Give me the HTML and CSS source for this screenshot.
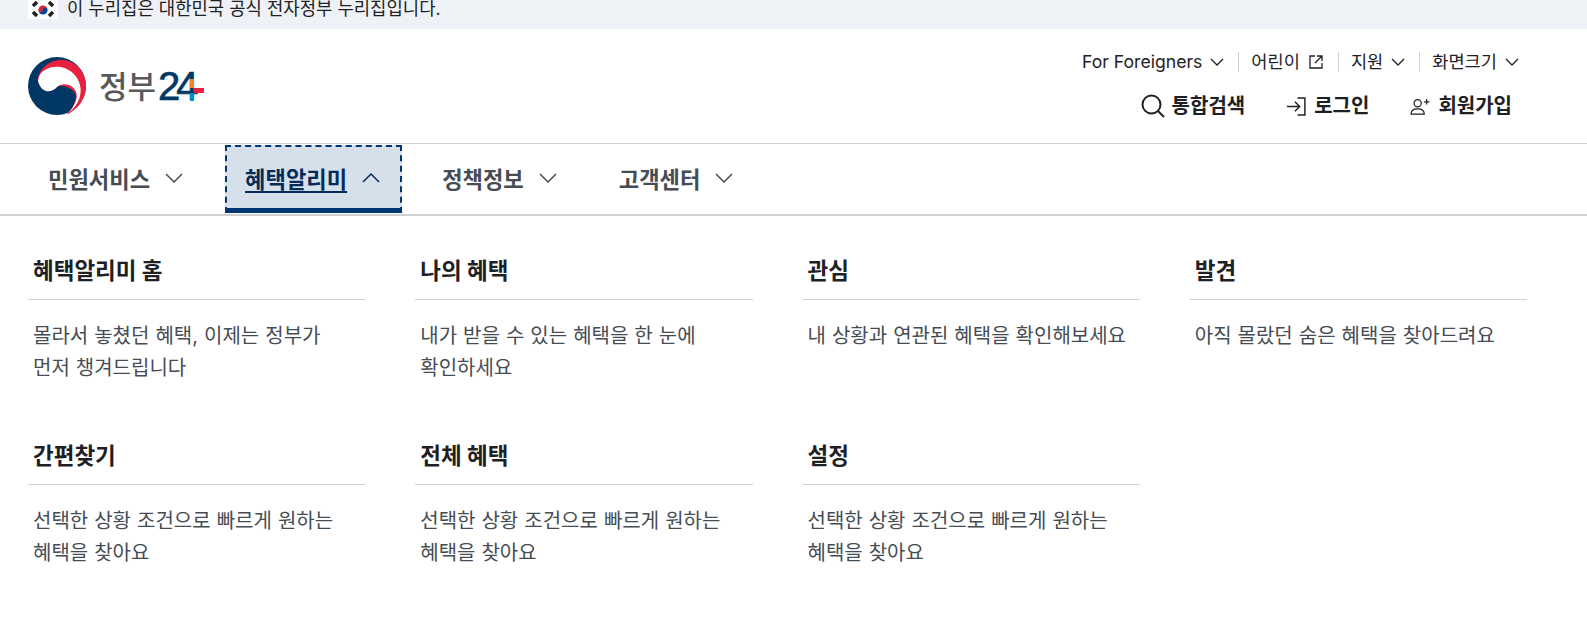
FILE: index.html
```html
<!DOCTYPE html>
<html lang="ko">
  <head>
    <meta charset="utf-8">
    <title>정부24</title>
    <link rel="stylesheet" href="styles.css">
  </head>
  <body>
    <div class="notice-bar">
      <svg class="flag" viewBox="0 0 30 19">
        <rect width="30" height="19" fill="#fff"/>
        <path d="M5 6 L9 2 M21 2 L25 6 M5 12 L9 16 M21 16 L25 12" stroke="#222" stroke-width="3.500"/>
        <path d="M10.500 10 a4.500 4.500 0 0 1 9 0 z" fill="#cd2e3a"/>
        <path d="M10.500 10 a4.500 4.500 0 0 0 9 0 z" fill="#0047a0"/>
        <circle cx="12.700" cy="10" r="2.250" fill="#cd2e3a"/>
        <circle cx="17.200" cy="10" r="2.250" fill="#0047a0"/>
      </svg>
      <span>이 누리집은 대한민국 공식 전자정부 누리집입니다.</span>
    </div>

    <header class="header">
      <a class="logo">
        <svg class="logo-mark" viewBox="14 14 174 174">
          <circle cx="101" cy="101" r="87" fill="#003764"/>
          <path d="M43 85 C45 50 78 22 115 22 C158 24 188 60 188 100 C188 138 165 170 130 187 C145 172 158 150 158 130 C150 100 100 95 100 105 C85 122 55 125 43 85 Z" fill="#e8213f"/>
          <path d="M44 85 C47 55 75 42 105 43 C140 45 170 75 172 110 C173 140 158 165 135 182 C155 160 165 135 158 118 C148 95 118 88 100 105 C85 122 55 125 44 85 Z" fill="#fff"/>
        </svg>
        <span class="logo-text">정부</span><span class="logo-num">24</span>
        <svg class="logo-plus" viewBox="0 0 14 22">
          <rect x="0" y="0" width="4" height="9" fill="#f58220"/>
          <rect x="4" y="9" width="10" height="5" fill="#e8213f"/>
          <rect x="0" y="14" width="4" height="8" fill="#0090d4"/>
        </svg>
      </a>
      <div class="header-right">
        <ul class="util-menu">
          <li>For Foreigners <svg class="chev" viewBox="0 0 14 8"><path d="M1 1 L7 7 L13 1"/></svg></li>
          <li>어린이 <svg class="ext" viewBox="0 0 16 16"><path d="M7 2 H2 V14 H14 V9 M9 2 H14 V7 M14 2 L7 9"/></svg></li>
          <li>지원 <svg class="chev" viewBox="0 0 14 8"><path d="M1 1 L7 7 L13 1"/></svg></li>
          <li>화면크기 <svg class="chev" viewBox="0 0 14 8"><path d="M1 1 L7 7 L13 1"/></svg></li>
        </ul>
        <div class="actions">
          <a class="action">
            <svg class="icon-search" viewBox="0 0 24 24"><circle cx="10.500" cy="10.500" r="9"/><path d="M17 17 L23 23"/></svg>
            통합검색
          </a>
          <a class="action">
            <svg class="icon-login" viewBox="0 0 20 20"><path d="M11 2 H18 V18 H11 M1 10 H13 M8.500 5.500 L13 10 L8.500 14.500"/></svg>
            로그인
          </a>
          <a class="action">
            <svg class="icon-user" viewBox="0 0 22 18"><circle cx="8" cy="5.500" r="3.800"/><path d="M1 17 C1 13 4 11.500 8 11.500 C12 11.500 15 13 15 17 Z M17.500 1 V7 M14.500 4 H20.500"/></svg>
            회원가입
          </a>
        </div>
      </div>
    </header>

    <nav class="nav">
      <a class="nav-item">민원서비스 <svg class="nav-chev" viewBox="0 0 18 10"><path d="M1 1 L9 9 L17 1"/></svg></a>
      <a class="nav-item active"><span class="nav-label">혜택알리미</span> <svg class="nav-chev" viewBox="0 0 18 10"><path d="M1 9 L9 1 L17 9"/></svg></a>
      <a class="nav-item">정책정보 <svg class="nav-chev" viewBox="0 0 18 10"><path d="M1 1 L9 9 L17 1"/></svg></a>
      <a class="nav-item">고객센터 <svg class="nav-chev" viewBox="0 0 18 10"><path d="M1 1 L9 9 L17 1"/></svg></a>
    </nav>

    <main class="menu-grid">
      <section class="menu-card">
        <h3 class="menu-title">혜택알리미 홈</h3>
        <p class="menu-desc">몰라서 놓쳤던 혜택, 이제는 정부가<br>먼저 챙겨드립니다</p>
      </section>
      <section class="menu-card">
        <h3 class="menu-title">나의 혜택</h3>
        <p class="menu-desc">내가 받을 수 있는 혜택을 한 눈에<br>확인하세요</p>
      </section>
      <section class="menu-card">
        <h3 class="menu-title">관심</h3>
        <p class="menu-desc">내 상황과 연관된 혜택을 확인해보세요</p>
      </section>
      <section class="menu-card">
        <h3 class="menu-title">발견</h3>
        <p class="menu-desc">아직 몰랐던 숨은 혜택을 찾아드려요</p>
      </section>
      <section class="menu-card">
        <h3 class="menu-title">간편찾기</h3>
        <p class="menu-desc">선택한 상황 조건으로 빠르게 원하는<br>혜택을 찾아요</p>
      </section>
      <section class="menu-card">
        <h3 class="menu-title">전체 혜택</h3>
        <p class="menu-desc">선택한 상황 조건으로 빠르게 원하는<br>혜택을 찾아요</p>
      </section>
      <section class="menu-card">
        <h3 class="menu-title">설정</h3>
        <p class="menu-desc">선택한 상황 조건으로 빠르게 원하는<br>혜택을 찾아요</p>
      </section>
    </main>
  </body>
</html>
```

FILE: styles.css
```css
* {
  box-sizing: border-box;
}

body {
  margin: 0;
  background-color: white;
  color: #1e2124;
  font-family: Inter, "Noto Sans CJK KR", sans-serif;
}

svg {
  fill: none;
  stroke: currentColor;
}

ul {
  list-style: none;
  margin: 0;
  padding: 0;
}

.notice-bar {
  display: flex;
  align-items: flex-start;
  gap: 9px;
  height: 29px;
  padding-left: 28px;
  background-color: #eef2f7;
  font-size: 17.800px;
  line-height: 18px;
}

.flag {
  width: 30px;
  height: 19px;
  stroke: none;
}

.header {
  display: flex;
  justify-content: space-between;
  height: 115px;
  padding: 0 54px 0 28px;
  border-bottom: 1px solid #cdd1d5;
}

.logo {
  display: flex;
  align-items: center;
  height: 114px;
}

.logo-mark {
  width: 58px;
  height: 58px;
  stroke: none;
  margin-right: 13px;
}

.logo-text {
  color: #58595b;
  font-size: 31px;
  font-weight: 500;
  line-height: 1;
}

.logo-num {
  margin-left: 2px;
  color: #003764;
  font-family: "Liberation Sans", sans-serif;
  font-size: 40px;
  letter-spacing: -4px;
  line-height: 1;
  -webkit-text-stroke: 0.700px #003764;
}

.logo-plus {
  width: 14px;
  height: 22px;
  stroke: none;
  margin: 8px 0 0 -5px;
}

.header-right {
  display: flex;
  flex-direction: column;
  align-items: flex-end;
}

.util-menu {
  display: flex;
  align-items: center;
  margin-top: 23px;
  font-size: 17.600px;
  line-height: 20px;
}

.util-menu li {
  display: flex;
  align-items: center;
  gap: 8px;
  padding: 0 14px 0 12px;
  border-left: 1px solid #cdd1d5;
}

.util-menu li:first-child {
  border-left: none;
}

.chev {
  width: 14px;
  height: 8px;
  stroke-width: 1.300;
}

.ext {
  width: 16px;
  height: 16px;
  stroke-width: 1.300;
}

.actions {
  display: flex;
  align-items: center;
  gap: 41px;
  margin-top: 21px;
  padding-right: 21px;
  font-size: 20px;
  font-weight: bold;
  line-height: 26px;
}

.action {
  display: flex;
  align-items: center;
  gap: 7px;
}

.icon-search {
  width: 24px;
  height: 24px;
  stroke-width: 2;
}

.icon-login {
  width: 21px;
  height: 21px;
  stroke-width: 1.400;
}

.icon-user {
  width: 21px;
  height: 17px;
  stroke-width: 1.300;
}

.nav {
  display: flex;
  gap: 20px;
  height: 72px;
  padding: 1px 0 0 28px;
  border-bottom: 2px solid #cdd1d5;
}

.nav-item {
  display: flex;
  align-items: center;
  gap: 15px;
  height: 68px;
  padding: 0 22px 2px 20px;
  color: #464c53;
  font-size: 22.200px;
  font-weight: bold;
}

.nav-item.active {
  background-color: #d6e0eb;
  border: 2px dashed #003675;
  border-bottom: 5px solid #003675;
  padding: 0 20px 0 18px;
  color: #052b57;
}

.nav-label {
  text-decoration: underline;
  text-decoration-thickness: 2px;
  text-underline-offset: 3px;
}

.nav-chev {
  width: 18px;
  height: 10px;
  stroke-width: 1.500;
}

.menu-grid {
  display: grid;
  grid-template-columns: repeat(4, 337.250px);
  column-gap: 50px;
  row-gap: 54px;
  padding: 37px 0 0 28px;
}

.menu-title {
  margin: 0;
  padding: 0 5px 10px;
  border-bottom: 1px solid #cdd1d5;
  color: #1e2124;
  font-size: 22.500px;
  font-weight: bold;
  line-height: 36px;
}

.menu-desc {
  margin: 0;
  padding: 20px 5px 0;
  color: #464c53;
  font-size: 20px;
  word-spacing: 0.400px;
  line-height: 32px;
}
```
